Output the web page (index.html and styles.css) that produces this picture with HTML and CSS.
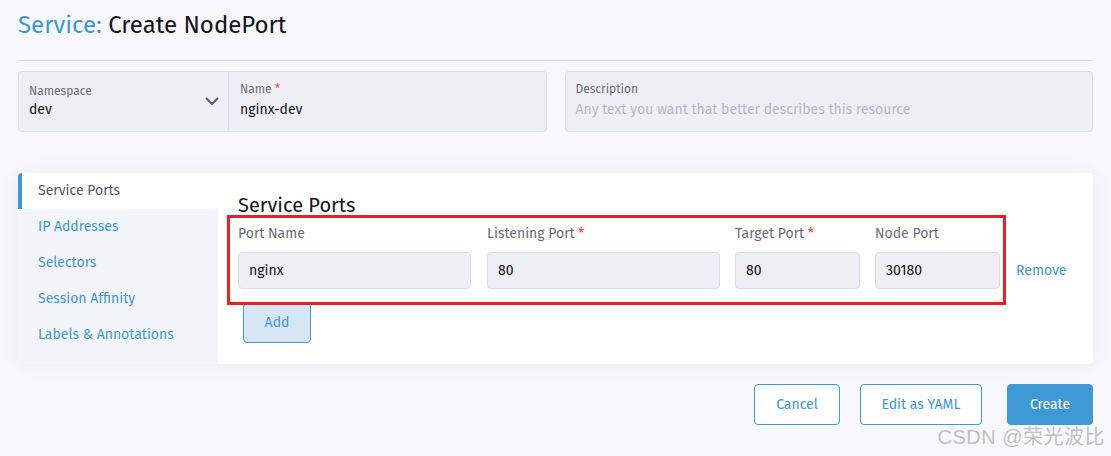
FILE: index.html
```html
<!DOCTYPE html>
<html lang="en">
<head>
<meta charset="utf-8">
<title>Service: Create NodePort</title>
<link rel="stylesheet" href="styles.css">
</head>
<body>
<div class="page">
  <header class="header">
    <h1 class="title"><span class="title-type">Service:</span> Create NodePort</h1>
  </header>

  <div class="top-row">
    <div class="field-group">
      <div class="field ns">
        <div class="field-label">Namespace</div>
        <div class="field-value">dev</div>
        <svg class="chevron" viewBox="0 0 14 9" width="14" height="9"><path d="M1.5 1.5 L7 7 L12.5 1.5" fill="none" stroke="#5a5d6a" stroke-width="2" stroke-linecap="round"/></svg>
      </div>
      <div class="field name">
        <div class="field-label">Name <span class="req">*</span></div>
        <div class="field-value">nginx-dev</div>
      </div>
    </div>
    <div class="field desc">
      <div class="field-label">Description</div>
      <div class="field-value placeholder">Any text you want that better describes this resource</div>
    </div>
  </div>

  <div class="panel">
    <nav class="tabs">
      <div class="tab active">Service Ports</div>
      <div class="tab">IP Addresses</div>
      <div class="tab">Selectors</div>
      <div class="tab">Session Affinity</div>
      <div class="tab">Labels &amp; Annotations</div>
    </nav>
    <section class="content">
      <h2 class="section-title">Service Ports</h2>
      <div class="ports-row">
        <div class="ports-grid">
          <div class="col col-wide">
            <div class="col-label">Port Name</div>
            <div class="input">nginx</div>
          </div>
          <div class="col col-wide col-2">
            <div class="col-label">Listening Port <span class="req">*</span></div>
            <div class="input">80</div>
          </div>
          <div class="col col-narrow">
            <div class="col-label">Target Port <span class="req">*</span></div>
            <div class="input">80</div>
          </div>
          <div class="col col-narrow col-last">
            <div class="col-label">Node Port</div>
            <div class="input">30180</div>
          </div>
        </div>
        <a class="remove">Remove</a>
        <div class="highlight"></div>
      </div>
      <button class="btn-add">Add</button>
    </section>
  </div>

  <div class="footer">
    <button class="btn btn-outline btn-cancel">Cancel</button>
    <button class="btn btn-outline btn-yaml">Edit as YAML</button>
    <button class="btn btn-primary">Create</button>
  </div>
</div>
<div class="watermark">CSDN @荣光波比</div>
</body>
</html>
```

FILE: styles.css
```css
* { box-sizing: border-box; }
html, body { margin: 0; padding: 0; }
body {
  background: #f8f8fc;
  font-family: "Fira Sans", Lato, "Noto Sans", sans-serif;
  color: #141419;
  width: 1111px;
  height: 456px;
  overflow: hidden;
  position: relative;
}
.page { padding: 0 18px; }

.header {
  padding: 9px 0 19px;
  border-bottom: 1px solid #dcdee7;
}
.title {
  margin: 0;
  font-size: 24px;
  line-height: 32px;
  font-weight: 400;
  color: #141419;
}
.title-type { color: #3d98d3; }

.top-row {
  margin-top: 10px;
  display: grid;
  grid-template-columns: 1fr 1fr;
  column-gap: 18px;
}
.field-group {
  display: flex;
  height: 61px;
  background: #eeeff4;
  border: 1px solid #dcdee7;
  border-radius: 4px;
}
.field {
  position: relative;
  padding: 9px 10px 0;
}
.field.ns { width: 210px; border-right: 1px solid #dcdee7; }
.field.ns .field-label { margin-top: 2px; }
.field.ns .field-value { margin-top: -1px; }
.field.name { flex: 1; padding-left: 11px; }
.field.desc {
  height: 61px;
  background: #eeeff4;
  border: 1px solid #dcdee7;
  border-radius: 4px;
}
.field-label {
  font-size: 12px;
  line-height: 16px;
  color: #6c6c76;
}
.field-value {
  font-size: 14px;
  line-height: 24px;
  margin-top: 1px;
  color: #141419;
}
.placeholder { color: #b5b8c6; }
.req { color: #f64747; }
.chevron { position: absolute; right: 9px; top: 25px; }

.panel {
  margin-top: 41px;
  display: flex;
  height: 191px;
  background: #fff;
  border-radius: 4px;
  box-shadow: 0 0 20px rgba(0, 0, 0, 0.06);
  overflow: hidden;
}
.tabs {
  width: 200px;
  background: #f4f5fa;
  flex-shrink: 0;
}
.tab {
  height: 36px;
  line-height: 36px;
  font-size: 14px;
  color: #3d98d3;
  border-left: 4px solid transparent;
  padding-left: 16px;
}
.tab.active {
  background: #fff;
  color: #555762;
  border-left-color: #3d98d3;
}

.content {
  flex: 1;
  padding: 20px 20px 0 20px;
}
.section-title {
  margin: 0;
  font-size: 20px;
  line-height: 24px;
  font-weight: 400;
  color: #141419;
}
.ports-row {
  position: relative;
  display: flex;
  align-items: flex-end;
  margin-top: 7px;
}
.ports-grid { display: flex; }
.col-wide { width: 233px; margin-right: 16px; }
.col-2 { margin-right: 15px; }
.col-narrow { width: 125px; margin-right: 15px; }
.col-last { margin-right: 0; }
.col-label {
  font-size: 14px;
  line-height: 18px;
  color: #6c6c76;
  padding-top: 1px;
}
.input {
  margin-top: 9px;
  height: 37px;
  line-height: 35px;
  padding: 0 10px;
  background: #eeeff4;
  border: 1px solid #dcdee7;
  border-radius: 4px;
  font-size: 14px;
  color: #141419;
}
.remove {
  margin-left: 16px;
  line-height: 37px;
  font-size: 14px;
  color: #3d98d3;
}
.highlight {
  position: absolute;
  left: -11px;
  top: -9px;
  width: 779px;
  height: 90px;
  border: 3px solid #e8202a;
  pointer-events: none;
}
.btn-add {
  display: block;
  margin: 13px 0 0 5px;
  width: 68px;
  height: 41px;
  background: #d6e6f5;
  border: 1px solid #3d98d3;
  border-radius: 4px;
  color: #3d98d3;
  font-family: inherit;
  font-size: 14px;
}

.footer {
  margin-top: 20px;
  display: flex;
  justify-content: flex-end;
}
.btn {
  height: 41px;
  border-radius: 4px;
  font-family: inherit;
  font-size: 14px;
  padding: 0;
}
.btn-outline {
  background: #fff;
  border: 1px solid #3d98d3;
  color: #3d98d3;
}
.btn-cancel { width: 86px; }
.btn-yaml { width: 122px; margin-left: 20px; }
.btn-primary {
  width: 86px;
  margin-left: 25px;
  background: #3d98d3;
  border: 1px solid #3d98d3;
  color: #fff;
}
.watermark {
  position: absolute;
  right: 6px;
  bottom: 6px;
  font-family: "Liberation Sans", "Noto Sans CJK SC", sans-serif;
  font-size: 20px;
  color: #c0c0c0;
  text-shadow: 1px 1px 0 #fff;
  letter-spacing: 0.5px;
}
```
